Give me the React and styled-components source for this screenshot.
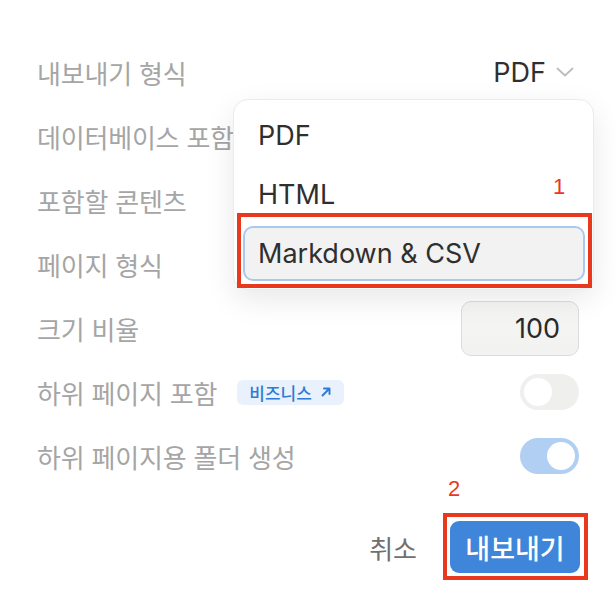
import React from 'react';
import styled, { createGlobalStyle } from 'styled-components';

const GlobalStyle = createGlobalStyle`
  html, body {
    margin: 0;
    padding: 0;
    background: #ffffff;
  }
  body {
    font-family: "Inter", "Noto Sans CJK KR", sans-serif;
  }
`;

const Page = styled.div`
  position: relative;
  width: 616px;
  height: 614px;
  box-sizing: border-box;
  padding: 40px 37px 0 37px;
  overflow: hidden;
`;

const Row = styled.div`
  height: 64px;
  display: flex;
  align-items: center;
  justify-content: space-between;
`;

const Label = styled.div`
  display: flex;
  align-items: center;
  gap: 20px;
  font-size: 26px;
  color: #a5a5a5;
  letter-spacing: -0.2px;
`;

const Select = styled.div`
  display: flex;
  align-items: center;
  gap: 10px;
  font-size: 27px;
  color: #2f2f2f;
  margin-right: 5px;
`;

const Badge = styled.span`
  display: inline-flex;
  align-items: center;
  gap: 8px;
  height: 25px;
  padding: 0 12px;
  border-radius: 6px;
  background: #e8f1fc;
  color: #2e7bd5;
  font-size: 17px;
  font-weight: 500;
  letter-spacing: 0;
`;

const NumberBox = styled.div`
  width: 118px;
  height: 55px;
  box-sizing: border-box;
  border: 1.5px solid #dcdcdc;
  border-radius: 10px;
  background: linear-gradient(#f6f6f5, #f2f2f1);
  display: flex;
  align-items: center;
  justify-content: flex-end;
  padding-right: 18px;
  font-size: 27px;
  color: #2a2a2a;
`;

const Toggle = styled.div`
  width: 59px;
  height: 36px;
  border-radius: 18px;
  box-sizing: border-box;
  padding: 4px;
  background: ${p => (p.$on ? '#b0cff2' : '#efefee')};
  display: flex;
  justify-content: ${p => (p.$on ? 'flex-end' : 'flex-start')};

  &::after {
    content: '';
    width: 28px;
    height: 28px;
    border-radius: 50%;
    background: #ffffff;
  }
`;

const Footer = styled.div`
  display: flex;
  justify-content: flex-end;
  align-items: center;
  gap: 33px;
  margin-top: 33px;
`;

const CancelButton = styled.button`
  border: none;
  background: none;
  padding: 0;
  font-family: inherit;
  font-size: 26px;
  color: #707070;
`;

const PrimaryButton = styled.button`
  width: 130px;
  height: 52px;
  margin-right: -1px;
  border: none;
  border-radius: 9px;
  background: #3f86da;
  color: #ffffff;
  font-family: inherit;
  font-size: 27px;
  font-weight: 500;
`;

const Menu = styled.div`
  position: absolute;
  left: 233px;
  top: 99px;
  width: 361px;
  box-sizing: border-box;
  padding: 6px 8px 8px 9px;
  background: #ffffff;
  border: 1px solid #ebebeb;
  border-radius: 15px;
  box-shadow: 0 10px 30px rgba(0, 0, 0, 0.09);
  display: flex;
  flex-direction: column;
`;

const MenuItem = styled.div`
  height: ${p => (p.$active ? '55px' : '59px')};
  box-sizing: border-box;
  display: flex;
  align-items: center;
  padding-left: 13px;
  font-size: 27px;
  color: #2f2f2f;
  border-radius: 10px;
  background: ${p => (p.$active ? '#f2f2f2' : 'transparent')};
  border: ${p => (p.$active ? '2px solid #a9c9f1' : '2px solid transparent')};
  margin-top: ${p => (p.$active ? '2px' : '0')};
`;

const Mark = styled.div`
  position: absolute;
  left: ${p => p.$x}px;
  top: ${p => p.$y}px;
  width: ${p => p.$w}px;
  height: ${p => p.$h}px;
  box-sizing: border-box;
  border: 4px solid #e8391f;
  pointer-events: none;
`;

const MarkNumber = styled.div`
  position: absolute;
  left: ${p => p.$x}px;
  top: ${p => p.$y}px;
  font-family: "Liberation Sans", sans-serif;
  font-size: 22px;
  color: #e8391f;
`;

const Chevron = () => (
  <svg width="18" height="10" viewBox="0 0 18 10" fill="none">
    <path d="M1.5 1.5l7.5 7 7.5-7" stroke="#bdbdbd" strokeWidth="1.8" strokeLinecap="round" strokeLinejoin="round" />
  </svg>
);

const ArrowUpRight = () => (
  <svg width="12" height="12" viewBox="0 0 12 12" fill="none">
    <path d="M2.5 9.5L9.5 2.5M4 2.5h5.5V8" stroke="#2e7bd5" strokeWidth="1.9" strokeLinecap="round" strokeLinejoin="round" />
  </svg>
);

export default function App() {
  return (
    <>
      <GlobalStyle />
      <Page>
        <Row>
          <Label>내보내기 형식</Label>
          <Select>PDF <Chevron /></Select>
        </Row>
        <Row><Label>데이터베이스 포함</Label></Row>
        <Row><Label>포함할 콘텐츠</Label></Row>
        <Row><Label>페이지 형식</Label></Row>
        <Row>
          <Label>크기 비율</Label>
          <NumberBox>100</NumberBox>
        </Row>
        <Row>
          <Label>하위 페이지 포함 <Badge>비즈니스 <ArrowUpRight /></Badge></Label>
          <Toggle />
        </Row>
        <Row>
          <Label>하위 페이지용 폴더 생성</Label>
          <Toggle $on />
        </Row>
        <Footer>
          <CancelButton>취소</CancelButton>
          <PrimaryButton>내보내기</PrimaryButton>
        </Footer>

        <Menu>
          <MenuItem>PDF</MenuItem>
          <MenuItem>HTML</MenuItem>
          <MenuItem $active>Markdown &amp; CSV</MenuItem>
        </Menu>

        <Mark $x={237} $y={213} $w={355} $h={75} />
        <MarkNumber $x={553} $y={174}>1</MarkNumber>
        <Mark $x={443} $y={513} $w={145} $h={67} />
        <MarkNumber $x={448} $y={476}>2</MarkNumber>
      </Page>
    </>
  );
}
